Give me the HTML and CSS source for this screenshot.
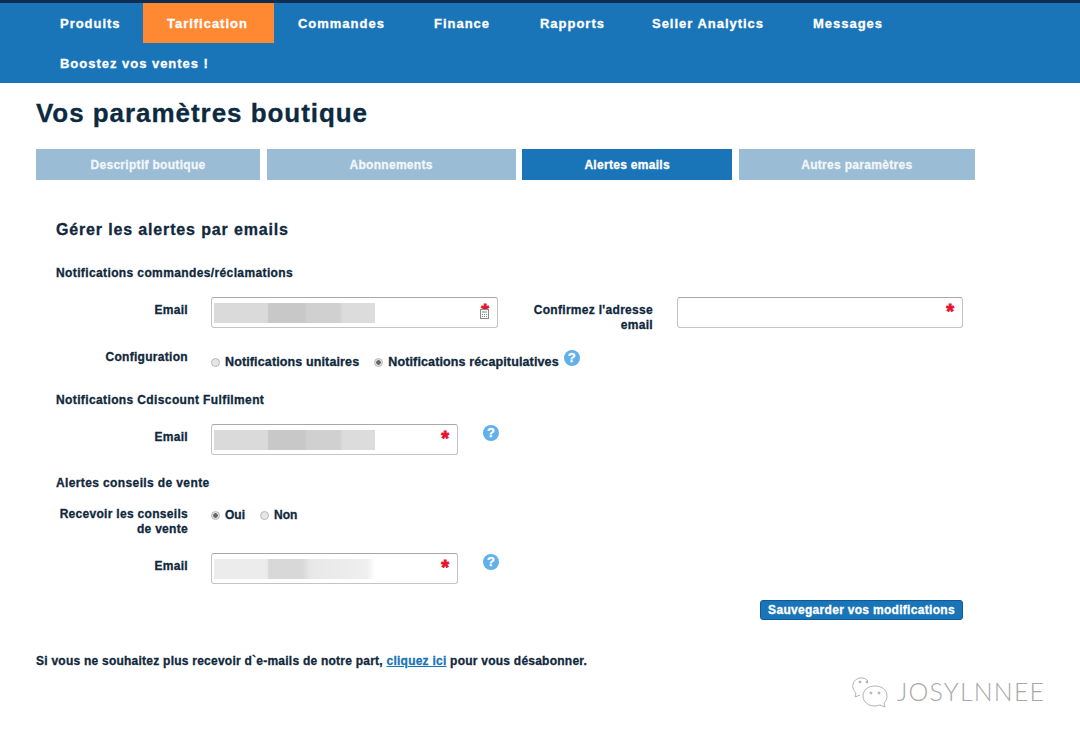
FILE: index.html
```html
<!DOCTYPE html>
<html lang="fr">
<head>
<meta charset="utf-8">
<title>Vos paramètres boutique</title>
<link rel="stylesheet" href="styles.css">
</head>
<body>
<nav class="nav">
  <a class="nav-item">Produits</a>
  <a class="nav-item active">Tarification</a>
  <a class="nav-item">Commandes</a>
  <a class="nav-item">Finance</a>
  <a class="nav-item">Rapports</a>
  <a class="nav-item">Seller Analytics</a>
  <a class="nav-item">Messages</a>
  <a class="nav-item">Boostez vos ventes !</a>
</nav>
<main class="page">
  <h1 class="title">Vos paramètres boutique</h1>
  <div class="tabs">
    <a class="tab">Descriptif boutique</a>
    <a class="tab">Abonnements</a>
    <a class="tab current">Alertes emails</a>
    <a class="tab">Autres paramètres</a>
  </div>
  <form class="form">
    <h2 class="form-title">Gérer les alertes par emails</h2>

    <h3 class="section first">Notifications commandes/réclamations</h3>
    <div class="row row-email1">
      <label class="label">Email</label>
      <div class="input wide"><span class="blur"></span><span class="star">*</span>
        <svg class="calc" width="9" height="10" viewBox="0 0 9 10"><rect x="0.5" y="0.5" width="8" height="9" fill="#fff" stroke="#8a8a8a"/><path d="M2 3h5M2 5.500h1M4 5.500h1M6 5.500h1M2 7.500h1M4 7.500h1M6 7.500h1" stroke="#6f8f80"/></svg>
      </div>
      <label class="label label-confirm">Confirmez l'adresse email</label>
      <div class="input wide"><span class="star">*</span></div>
    </div>
    <div class="row row-config">
      <label class="label">Configuration</label>
      <div class="options">
        <span class="radio"></span><span class="opt">Notifications unitaires</span>
        <span class="radio on"></span><span class="opt">Notifications récapitulatives</span>
        <span class="help help-inline">?</span>
      </div>
    </div>

    <h3 class="section fulfil">Notifications Cdiscount Fulfilment</h3>
    <div class="row row-email2">
      <label class="label">Email</label>
      <div class="input narrow"><span class="blur"></span><span class="star">*</span></div>
      <span class="help help-side">?</span>
    </div>

    <h3 class="section conseils">Alertes conseils de vente</h3>
    <div class="row row-receive">
      <label class="label">Recevoir les conseils de vente</label>
      <div class="options tight">
        <span class="radio on"></span><span class="opt">Oui</span>
        <span class="radio"></span><span class="opt">Non</span>
      </div>
    </div>
    <div class="row row-email3">
      <label class="label">Email</label>
      <div class="input narrow"><span class="blur pale"></span><span class="star">*</span></div>
      <span class="help help-side">?</span>
    </div>

    <div class="actions"><button type="button" class="save">Sauvegarder vos modifications</button></div>
  </form>
  <p class="unsub">Si vous ne souhaitez plus recevoir d`e-mails de notre part, <a class="link">cliquez ici</a> pour vous désabonner.</p>
</main>
<div class="mark">
  <svg width="40" height="34" viewBox="0 0 40 34" fill="none" stroke="#b4b4b4" stroke-width="1">
    <path d="M17 7C13 2 4 3 2 10c-1 4 1 7 3 9l-1 4 5-2"/>
    <circle cx="9" cy="8" r="1" fill="#b4b4b4"/><circle cx="16" cy="8" r="1" fill="#b4b4b4"/>
    <path d="M24 12c7 0 12 4 12 10 0 3-1 5-3 7l1 4-5-2c-8 3-17-1-17-9 0-6 5-10 12-10z"/>
    <circle cx="20" cy="19" r="1" fill="#b4b4b4"/><circle cx="28" cy="19" r="1" fill="#b4b4b4"/>
  </svg>
  <span class="mark-text">JOSYLNNEE</span>
</div>
</body>
</html>
```

FILE: styles.css
```css
* { box-sizing: border-box; }
html, body { margin: 0; padding: 0; }
body {
  width: 1080px;
  height: 737px;
  overflow: hidden;
  position: relative;
  background: #fff;
  color: #10283c;
  font-family: "Liberation Sans", Arial, sans-serif;
  font-weight: 700;
  font-size: 12px;
  -webkit-text-stroke: 0.3px currentColor;
}
.nav {
  display: grid;
  grid-template-columns: 107px 131px 136px 106px 112px 161px 1fr;
  grid-auto-rows: 40px;
  height: 83px;
  padding-left: 36px;
  background: #1a75b8;
  border-top: 3px solid #0d2d52;
}
.nav-item {
  display: block;
  padding: 1px 0 0 24px;
  line-height: 40px;
  color: #fff;
  font-size: 13px;
  letter-spacing: 0.98px;
}
.nav-item.active { background: #ff8833; }
.nav-item:last-child { grid-column: 1 / -1; }
.page { padding: 0 0 0 36px; }
.title {
  margin: 0;
  padding-top: 16px;
  height: 66px;
  font-size: 26px;
  line-height: 28px;
  letter-spacing: 0.95px;
  color: #0c2a40;
}
.tabs {
  display: grid;
  grid-template-columns: 224px 249px 210px 236px;
  column-gap: 6.6px;
  width: 940px;
}
.tab {
  height: 31px;
  padding-top: 1px;
  line-height: 31px;
  text-align: center;
  background: #9abcd5;
  color: #f2f6fa;
  font-size: 12px;
  letter-spacing: 0.3px;
}
.tab.current { background: #1a75b8; color: #fff; }
.form { padding-left: 20px; width: 927px; }
.form-title {
  margin: 0;
  padding-top: 41px;
  font-size: 16px;
  line-height: 18px;
  letter-spacing: 0.85px;
}
.section {
  margin: 0;
  font-size: 12px;
  line-height: 14px;
  letter-spacing: 0.38px;
}
.section.first { margin-top: 27px; }
.section.fulfil { margin-top: 18px; }
.section.conseils { margin-top: 21px; }
.row { display: flex; align-items: flex-start; }
.label {
  width: 132px;
  flex: none;
  text-align: right;
  line-height: 15px;
  letter-spacing: 0.3px;
}
.row-email1 { margin-top: 17px; height: 48px; }
.row-email1 .label, .row-email2 .label, .row-email3 .label { padding-top: 6px; }
.input {
  position: relative;
  flex: none;
  height: 31px;
  margin-left: 23px;
  background: #fff;
  border: 1px solid #c4c4c4;
  border-top-color: #a8a8a8;
  border-radius: 3px;
}
.input.wide { width: 287px; }
.label-confirm + .input.wide { width: 286px; }
.input.narrow { width: 247px; }
.blur {
  position: absolute;
  left: 2px;
  top: 5px;
  width: 161px;
  height: 20px;
  background: linear-gradient(90deg, #dadada 0 33%, #c8c8c8 34% 56%, #d0d0d0 58% 78%, #dcdcdc 80% 100%);
}
.blur.pale {
  background: linear-gradient(90deg, #ececec 0 33%, #d8d8d8 34% 55%, #e8e8e8 60%, #efefef 95%, #fff 100%);
}
.star {
  position: absolute;
  right: 8px;
  top: 3px;
  color: #e8102c;
  font-size: 20px;
  line-height: 20px;
  -webkit-text-stroke: 0.8px #e8102c;
}
.calc { position: absolute; right: 8px; top: 11px; }
.label.label-confirm { width: 130px; margin-left: 25px; }
.label-confirm + .input { margin-left: 24px; }
.row-config { height: 30px; }
.row-config .label { padding-top: 5px; }
.options { display: flex; align-items: center; margin-left: 23px; padding-top: 10px; }
.radio {
  width: 9px;
  height: 9px;
  border-radius: 50%;
  background: #e6e6e6;
  border: 1px solid #b8b8b8;
  margin-right: 5px;
}
.radio.on { background: radial-gradient(circle, #666 0 2px, #e0e0e0 2.500px); }
.opt { margin-right: 15px; font-size: 12.500px; line-height: 15px; letter-spacing: 0.13px; }
.tight .opt { margin-right: 15px; font-size: 12px; letter-spacing: 0; }
.help {
  display: block;
  flex: none;
  width: 16px;
  height: 16px;
  border-radius: 50%;
  background: #62b0ea;
  color: #fff;
  text-align: center;
  font-size: 13px;
  line-height: 16px;
}
.help-inline { margin: -9px 0 0 -10px; }
.help-side { margin: 1px 0 0 25px; }
.row-email2 { margin-top: 17px; height: 31px; }
.row-receive { margin-top: 16px; height: 47px; }
.row-receive .label { padding-top: 1px; }
.options.tight { padding-top: 0; height: 15px; margin-top: 2px; }
.row-email3 { height: 31px; margin-top: 0; }
.actions { display: flex; justify-content: flex-end; margin-top: 16px; }
.save {
  width: 203px;
  height: 20px;
  padding: 0;
  border: 1px solid #0f5a94;
  border-radius: 3px;
  background: #1a75b8;
  color: #fff;
  font: 700 12px "Liberation Sans", Arial, sans-serif;
  letter-spacing: 0.3px;
}
.unsub { margin: 34px 0 0; font-size: 12px; line-height: 15px; letter-spacing: 0.24px; }
.link { color: #1a75b8; text-decoration: underline; }
.mark {
  position: absolute;
  left: 851px;
  top: 674px;
  display: flex;
  align-items: center;
  gap: 6px;
  -webkit-text-stroke: 0;
}
.mark-text {
  font-family: "Lato", sans-serif;
  font-weight: 300;
  font-size: 25px;
  line-height: 34px;
  letter-spacing: 1.2px;
  color: #a8a8a8;
}
```
